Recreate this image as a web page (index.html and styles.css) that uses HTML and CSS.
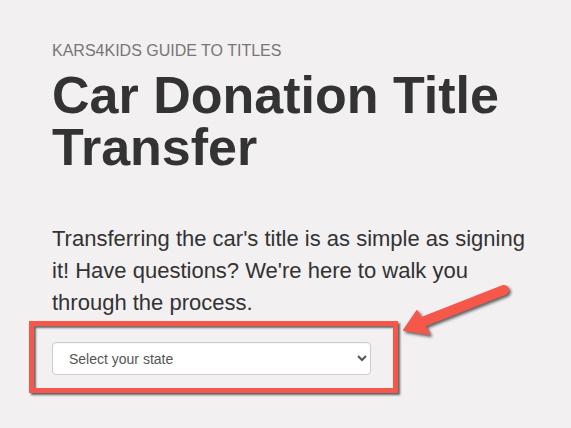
FILE: index.html
```html
<!DOCTYPE html>
<html lang="en">
<head>
    <meta charset="UTF-8">
    <meta name="viewport" content="width=device-width, initial-scale=1.0">
    <title>Car Donation Title Transfer - Kars4Kids</title>
    <link rel="stylesheet" href="styles.css">
</head>
<body>
    <div class="container">
        <p class="kicker">Kars4Kids Guide to Titles</p>
        <h1>Car Donation Title Transfer</h1>
        <p class="lead">Transferring the car's title is as simple as signing it! Have questions? We're here to walk you through the process.</p>

        <div class="state-picker">
            <select class="form-control" id="state">
                <option value="">Select your state</option>
                <option>Alabama</option>
                <option>Alaska</option>
                <option>Arizona</option>
                <option>California</option>
                <option>New Jersey</option>
                <option>New York</option>
            </select>

            <!-- highlight box + pointer arrow -->
            <span class="highlight"></span>
            <svg class="pointer" width="130" height="70" viewBox="0 0 130 70">
                <line x1="109" y1="15" x2="30" y2="46" stroke="#f5574b" stroke-width="10" stroke-linecap="round"/>
                <polygon points="9,55 22,36 34,59" fill="#f5574b" stroke="#f5574b" stroke-width="2" stroke-linejoin="round"/>
            </svg>
        </div>
    </div>
</body>
</html>
```

FILE: styles.css
```css
body {
    margin: 0;
    min-height: 428px;
    background: #f2f0f1;
    font-family: "Liberation Sans", Arial, sans-serif;
    color: #333;
}
.container {
    max-width: 485px;
    padding: 42px 0 0 52px;
}
.kicker {
    margin: 0;
    font-size: 16px;
    line-height: 18px;
    text-transform: uppercase;
    color: #777;
}
h1 {
    margin: 9px 0 0;
    font-size: 52px;
    line-height: 52px;
    font-weight: 700;
    color: #333;
}
.lead {
    margin: 50px 0 0;
    font-size: 22px;
    line-height: 32px;
    color: #333;
}
.state-picker {
    position: relative;
    width: 319px;
    margin-top: 23px;
}
.form-control {
    display: block;
    width: 100%;
    height: 33px;
    padding: 6px 12px;
    font-family: inherit;
    font-size: 14px;
    color: #555;
    background: #fff;
    border: 1px solid #ccc;
    border-radius: 4px;
    box-shadow: inset 0 1px 1px rgba(0,0,0,0.04);
}
.highlight {
    position: absolute;
    display: block;
    box-sizing: border-box;
    left: -23px;
    top: -21px;
    width: 369px;
    height: 72px;
    border: 5px solid #f5574b;
    box-shadow: 2px 2px 2px rgba(0,0,0,0.6), inset 2px 2px 2px rgba(0,0,0,0.55);
    pointer-events: none;
}
.pointer {
    position: absolute;
    left: 343px;
    top: -67px;
    filter: drop-shadow(2px 2px 1.5px rgba(0,0,0,0.6));
}
```
